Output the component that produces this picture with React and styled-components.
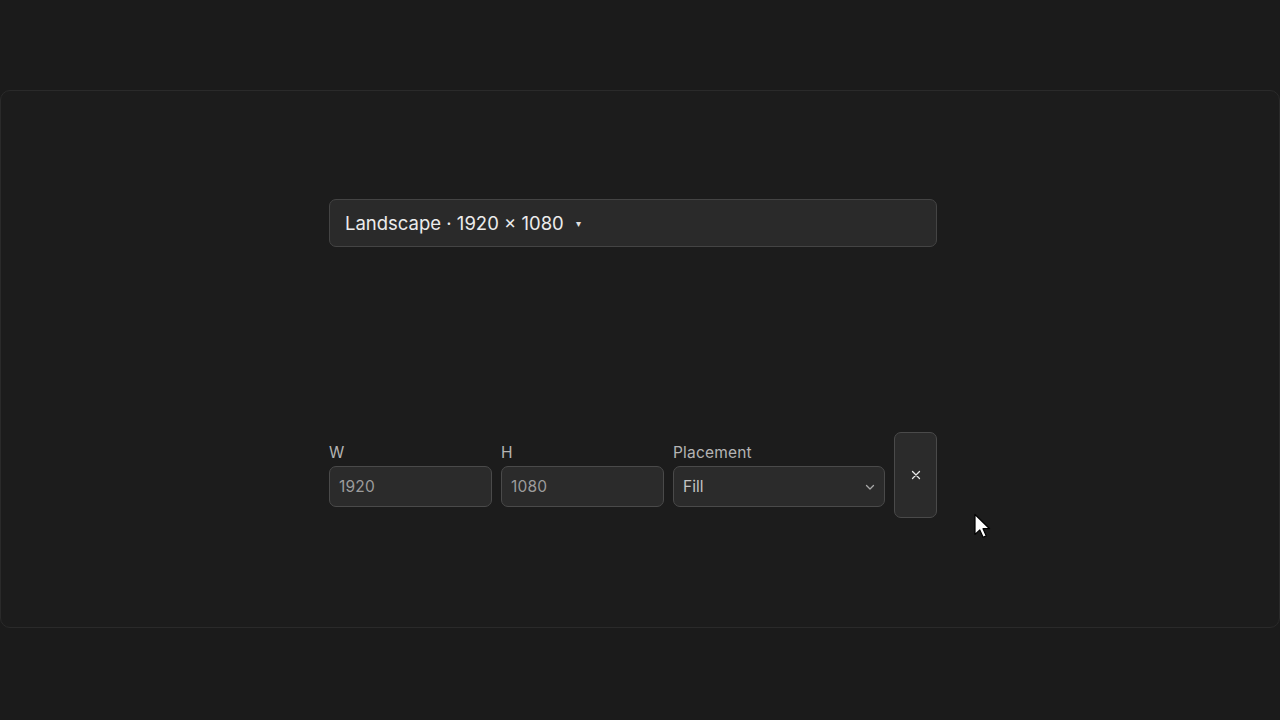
import React, { useState } from "react";
import styled, { createGlobalStyle } from "styled-components";

const Global = createGlobalStyle`
  html, body { margin: 0; padding: 0; background: #1b1b1b; }
  body { font-family: Inter, "Noto Sans", "Liberation Sans", sans-serif; }
`;

export default function App() {
  const [w, setW] = useState("");
  const [h, setH] = useState("");

  return (
    <Page>
      <Global />
      <Panel>
        <Column>
          <PresetBar type="button">
            Landscape · 1920 × 1080
            <Caret>▾</Caret>
          </PresetBar>

          <Row>
            <Field $w={163}>
              <Label htmlFor="w">W</Label>
              <Input id="w" placeholder="1920" value={w} onChange={(e) => setW(e.target.value)} />
            </Field>
            <Field $w={163}>
              <Label htmlFor="h">H</Label>
              <Input id="h" placeholder="1080" value={h} onChange={(e) => setH(e.target.value)} />
            </Field>
            <Field $w={212}>
              <Label>Placement</Label>
              <Select type="button">
                Fill
                <svg width="12" height="12" viewBox="0 0 12 12" fill="none">
                  <path d="M2.5 4.5 6 8l3.5-3.5" stroke="#a8a8a8" strokeWidth="1.3" strokeLinecap="round" strokeLinejoin="round" />
                </svg>
              </Select>
            </Field>
            <CloseBtn type="button" aria-label="Remove">
              <svg width="10" height="10" viewBox="0 0 10 10" fill="none">
                <path d="M1.5 1.5l7 7M8.5 1.5l-7 7" stroke="#e8e8e8" strokeWidth="1.3" strokeLinecap="round" />
              </svg>
            </CloseBtn>
          </Row>
        </Column>
        <Cursor width="18" height="26" viewBox="0 0 18 26">
          <path d="M2 1.5v20l4.8-4.6 3.3 7.4 3.2-1.4-3.3-7.2h6.6z" fill="#fff" stroke="#000" strokeWidth="1.2" strokeLinejoin="round" />
        </Cursor>
      </Panel>
    </Page>
  );
}

/* ---------------------- styled-components ---------------------- */

const Page = styled.div`
  width: 1280px;
  height: 720px;
  padding-top: 90px;
  box-sizing: border-box;
  background: #1b1b1b;
`;

const Panel = styled.section`
  position: relative;
  height: 538px;
  box-sizing: border-box;
  border: 1px solid #2a2a2a;
  border-radius: 10px;
  background: #1c1c1c;
  display: flex;
  justify-content: center;
  padding: 108px 14px 0 0;
`;

const Column = styled.div`
  width: 608px;
  display: flex;
  flex-direction: column;
`;

const PresetBar = styled.button`
  height: 48px;
  box-sizing: border-box;
  display: flex;
  align-items: center;
  padding: 0 15px;
  background: #2a2a2a;
  border: 1px solid #444;
  border-radius: 7px;
  color: #ececec;
  font-family: inherit;
  font-size: 18.5px;
  text-align: left;
  cursor: pointer;
`;

const Caret = styled.span`
  font-size: 10px;
  margin-left: 12px;
  color: #e0e0e0;
`;

const Row = styled.div`
  margin-top: 185px;
  display: flex;
  align-items: center;
  gap: 9px;
`;

const Field = styled.div`
  width: ${(p) => p.$w}px;
  display: flex;
  flex-direction: column;
  gap: 4px;
  padding-top: 1px;
`;

const Label = styled.label`
  font-size: 15.5px;
  line-height: 18px;
  letter-spacing: 0.2px;
  color: #b4b4b4;
`;

const Input = styled.input`
  height: 41px;
  box-sizing: border-box;
  padding: 0 9px;
  background: #2b2b2b;
  border: 1px solid #4a4a4a;
  border-radius: 7px;
  color: #d8d8d8;
  font-family: inherit;
  font-size: 15.5px;
  letter-spacing: 0.2px;
  outline: 0;
  &::placeholder { color: #9c9c9c; }
`;

const Select = styled.button`
  height: 41px;
  box-sizing: border-box;
  display: flex;
  align-items: center;
  justify-content: space-between;
  padding: 0 8px 0 9px;
  background: #2b2b2b;
  border: 1px solid #4a4a4a;
  border-radius: 7px;
  color: #c4c4c4;
  font-family: inherit;
  font-size: 15.5px;
  cursor: pointer;
`;

const CloseBtn = styled.button`
  width: 43px;
  height: 86px;
  box-sizing: border-box;
  display: grid;
  place-items: center;
  background: #2b2b2b;
  border: 1px solid #4a4a4a;
  border-radius: 7px;
  cursor: pointer;
`;

const Cursor = styled.svg`
  position: absolute;
  left: 972px;
  top: 422px;
`;
